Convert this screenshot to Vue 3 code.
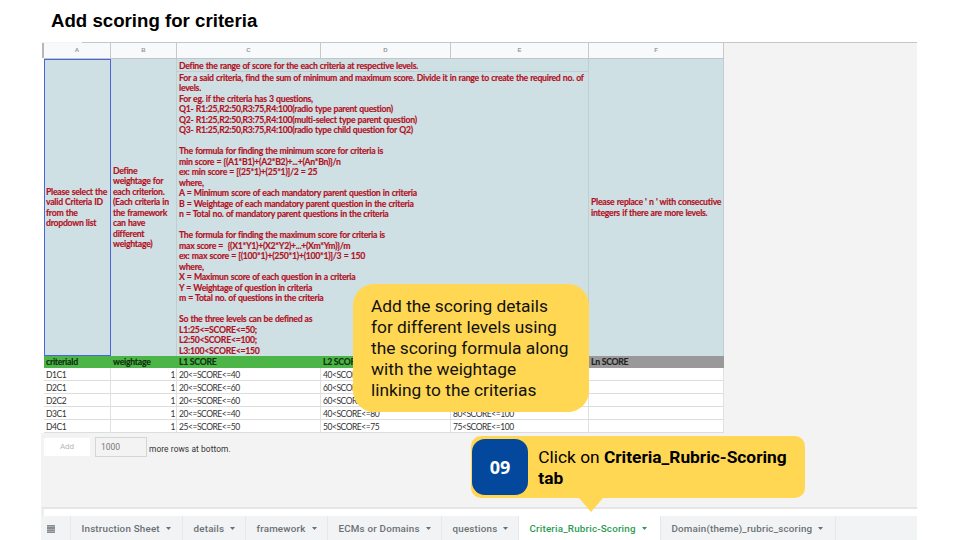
<script setup>
const columns = ['A', 'B', 'C', 'D', 'E', 'F']

const instructions = [
  'For a said criteria, find the sum of minimum and maximum score. Divide it in range to create the required no. of',
  'levels.',
  'For eg. if the criteria has 3 questions,',
  'Q1- R1:25,R2:50,R3:75,R4:100(radio type parent question)',
  'Q2- R1:25,R2:50,R3:75,R4:100(multi-select type parent question)',
  'Q3- R1:25,R2:50,R3:75,R4:100(radio type child question for Q2)',
  '',
  'The formula for finding the minimum score for criteria is',
  'min score = {(A1*B1)+(A2*B2)+...+(An*Bn)}/n',
  'ex: min score = [(25*1)+(25*1)]/2 = 25',
  'where,',
  'A = Minimum score of each mandatory parent question in criteria',
  'B = Weightage of each mandatory parent question in the criteria',
  'n = Total no. of mandatory parent questions in the criteria',
  '',
  'The formula for finding the maximum score for criteria is',
  'max score =  {(X1*Y1)+(X2*Y2)+...+(Xm*Ym)}/m',
  'ex: max score = [(100*1)+(250*1)+(100*1)]/3 = 150',
  'where,',
  'X = Maximun score of each question in a criteria',
  'Y = Weightage of question in criteria',
  'm = Total no. of questions in the criteria',
  '',
  'So the three levels can be defined as',
  'L1:25<=SCORE<=50;',
  'L2:50<SCORE<=100;',
  'L3:100<SCORE<=150',
].join('\n')

const selectNote = 'Please select the\nvalid Criteria ID\nfrom the\ndropdown list'
const weightNote = 'Define\nweightage for\neach criterion.\n(Each criteria in\nthe framework\ncan have\ndifferent\nweightage)'
const levelNote = "Please replace ' n ' with consecutive\nintegers if there are more levels."

const headings = ['criteriaId', 'weightage', 'L1 SCORE', 'L2 SCORE', '', 'Ln SCORE']
const rows = [
  ['D1C1', '1', '20<=SCORE<=40', '40<SCORE', '', ''],
  ['D2C1', '1', '20<=SCORE<=60', '60<SCORE', '', ''],
  ['D2C2', '1', '20<=SCORE<=60', '60<SCORE', '', ''],
  ['D3C1', '1', '20<=SCORE<=40', '40<SCORE<=80', '80<SCORE<=100', ''],
  ['D4C1', '1', '25<=SCORE<=50', '50<SCORE<=75', '75<SCORE<=100', ''],
]

const tabs = [
  { name: 'Instruction Sheet', width: 112 },
  { name: 'details', width: 63 },
  { name: 'framework', width: 82 },
  { name: 'ECMs or Domains', width: 114 },
  { name: 'questions', width: 77 },
  { name: 'Criteria_Rubric-Scoring', width: 142, active: true },
  { name: 'Domain(theme)_rubric_scoring', width: 175 },
]
</script>

<template>
  <main class="slide">
    <h1>Add scoring for criteria</h1>
    <section class="sheet">
      <div class="body">
        <div class="gutter"><i></i></div>
        <div class="grid">
          <div v-for="c in columns" :key="c" class="col-head">{{ c }}</div>
          <div class="note select-note"><span>{{ selectNote }}</span></div>
          <div class="note weight-note"><span>{{ weightNote }}</span></div>
          <div class="note range-note"><span>Define the range of score for the each criteria at respective levels.</span></div>
          <div class="note level-note"><span>{{ levelNote }}</span></div>
          <div class="note formula-note"><span>{{ instructions }}</span></div>
          <div v-for="h in headings" :key="h" class="heading" :class="{ gray: h === 'Ln SCORE' }"><span>{{ h }}</span></div>
          <template v-for="(r, i) in rows" :key="i">
            <div v-for="(v, j) in r" :key="j" class="cell" :class="{ num: j === 1 }"><span>{{ v }}</span></div>
          </template>
        </div>
      </div>
      <div class="add-row">
        <div class="add">Add</div>
        <div class="count">1000</div>
        <div class="more">more rows at bottom.</div>
      </div>
      <div class="scroll"></div>
      <nav class="tabs">
        <div class="menu">
          <svg width="8" height="8" viewBox="0 0 8 8"><path d="M0 .9h8M0 3h8M0 5.1h8M0 7.2h8" stroke="#666a6e" stroke-width="1.3" /></svg>
        </div>
        <div v-for="t in tabs" :key="t.name" class="tab" :class="{ active: t.active }" :style="{ width: t.width + 'px' }">
          <span>{{ t.name }}</span>
          <svg width="5" height="3" viewBox="0 0 5 3"><path d="M0 0h5L2.5 3z" fill="currentColor" /></svg>
        </div>
      </nav>
    </section>

    <aside class="tip">Add the scoring details<br>for different levels using<br>the scoring formula along<br>with the weightage<br>linking to the criterias</aside>
    <aside class="step">
      <div class="badge">09</div>
      <p>Click on <b>Criteria_Rubric-Scoring<br>tab</b></p>
      <svg class="pointer" width="24" height="14" viewBox="0 0 24 14"><path d="M0 0h24L12 14z" fill="#ffd753" /></svg>
    </aside>
  </main>
</template>

<style>
body { margin: 0; background: #fff; }
</style>

<style scoped>
.slide {
  position: relative;
  box-sizing: border-box;
  width: 960px;
  height: 540px;
  padding-left: 41px;
  overflow: hidden;
  background: #fff;
  display: flex;
  flex-direction: column;
}
h1 {
  margin: 0;
  height: 42px;
  box-sizing: border-box;
  padding: 9px 0 0 10px;
  font: bold 18.67px/23px "Liberation Sans", Arial, sans-serif;
  color: #000;
}
.sheet {
  width: 876px;
  height: 498px;
  background: #f3f3f3;
  display: flex;
  flex-direction: column;
}
.body {
  height: 391px;
  display: flex;
  border-top: 1px solid;
  border-image: linear-gradient(to right, #f4f4f4 42px, #c4c6c8 42px) 1;
  box-sizing: border-box;
}
.gutter { width: 3px; background: #fff; display: flex; }
.gutter i { width: 2px; height: 15px; margin-left: 1px; background: #b7b7b7; }
.grid {
  display: grid;
  grid-template-columns: 67px 66px 144px 130px 138px 135px;
  grid-template-rows: 16px 13px 284px 12px repeat(5, 13px);
}
.grid > div { box-sizing: border-box; }
.col-head {
  background: #f8f9fa;
  border-right: 1px solid #c6c8ca;
  border-bottom: 1px solid #c2c4c6;
  font: bold 6px/15px "Liberation Sans", Arial, sans-serif;
  text-align: center;
  color: #969a9e;
}
.note {
  background: #cee0e4;
  color: #b3111f;
  font: bold 8.7px/10.5px Lato, sans-serif;
  letter-spacing: -.27px;
  word-spacing: .45px;
  -webkit-text-stroke: .15px currentColor;
  white-space: pre;
  padding-left: 2px;
  border-right: 1px solid #bdcfd3;
  display: flex;
  align-items: center;
}
.select-note { grid-area: 2 / 1 / 4 / 2; border: 1px solid #4866e0; padding-left: 1px; }
.weight-note { grid-area: 2 / 2 / 4 / 3; }
.range-note { grid-area: 2 / 3 / 3 / 6; border-bottom: 1px solid #bdcfd3; padding-top: 3px; }
.formula-note { grid-area: 3 / 3 / 4 / 6; padding-top: 1px; }
.level-note { grid-area: 2 / 6 / 4 / 7; }
.heading {
  background: #4cb548;
  color: #10300f;
  font: bold 8.7px/12px Lato, sans-serif;
  letter-spacing: -.27px;
  -webkit-text-stroke: .15px currentColor;
  padding-left: 2px;
  white-space: nowrap;
}
.heading.gray { background: #999; color: #222; }
.cell {
  background: #fff;
  border-right: 1px solid #e0e1e2;
  border-bottom: 1px solid #dcddde;
  color: #333;
  font: 8.5px/13px Lato, sans-serif;
  letter-spacing: -.46px;
  padding: 1px 0 0 2px;
  white-space: nowrap;
}
.cell.num { text-align: right; padding-right: 1px; }
.add-row {
  height: 74px;
  box-sizing: border-box;
  padding: 5px 0 0 3px;
  display: flex;
  align-items: flex-start;
  font-family: Roboto, sans-serif;
}
.add { width: 46px; height: 18px; background: #fff; text-align: center; font-size: 8px; line-height: 18px; color: #b4b4b4; }
.count {
  width: 52px;
  height: 20px;
  box-sizing: border-box;
  margin-left: 5px;
  margin-top: -1px;
  padding-left: 5px;
  border: 1px solid #d5d5d5;
  font-size: 8.5px;
  line-height: 18px;
  color: #777;
}
.more { margin: 6px 0 0 2px; font-size: 8.4px; line-height: 10px; color: #333; letter-spacing: .08px; }
.scroll {
  height: 9px;
  box-sizing: border-box;
  background: #fff;
  border-top: 2px solid #e5e5e5;
  border-left: 3px solid #eee;
}
.tabs { height: 24px; background: #f1f3f4; display: flex; }
.menu { width: 30px; box-sizing: border-box; border-right: 1px solid #e6e8ea; padding: 9px 0 0 6px; }
.menu svg { display: block; }
.tab {
  box-sizing: border-box;
  padding: 1px 0 0 10.5px;
  border-right: 1px solid #e6e8ea;
  display: flex;
  align-items: center;
  gap: 6px;
  font: 500 9.8px/24px Roboto, sans-serif;
  letter-spacing: .2px;
  color: #6c7074;
  white-space: nowrap;
}
.tab.active { background: #fff; color: #2b9b53; }
.tip {
  position: absolute;
  left: 353px;
  top: 284px;
  width: 236px;
  height: 128px;
  box-sizing: border-box;
  padding: 12px 0 0 18px;
  border-radius: 21px;
  background: #ffd753;
  font: 17.33px/21px Roboto, sans-serif;
  color: #111;
  white-space: nowrap;
}
.step {
  position: absolute;
  left: 471px;
  top: 436px;
  width: 334px;
  height: 62px;
  box-sizing: border-box;
  padding: 3px 0 0 1px;
  border-radius: 10px;
  background: #ffd753;
  display: flex;
  gap: 10.3px;
  font: 17.33px/21px Roboto, sans-serif;
  color: #000;
}
.badge {
  width: 56px;
  height: 56px;
  border-radius: 13px;
  background: #03489d;
  color: #fff;
  text-align: center;
  font: bold 18px/57px "Open Sans", sans-serif;
}
.step p { margin: 8px 0 0; white-space: nowrap; }
.step b { font-weight: 700; }
.pointer { position: absolute; left: 108px; top: 62px; }
</style>
